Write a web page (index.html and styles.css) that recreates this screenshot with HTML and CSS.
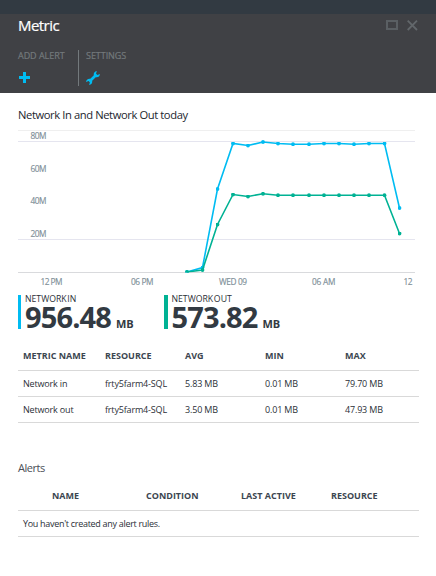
FILE: index.html
```html
<!DOCTYPE html>
<html lang="en">
<head>
<meta charset="utf-8">
<title>Metric</title>
<link rel="stylesheet" href="styles.css">
</head>
<body>
<div class="topbar"></div>
<header class="blade-header">
  <div class="title-row">
    <h1>Metric</h1>
    <div class="window-actions">
      <svg width="12" height="10" viewBox="0 0 12 10"><path d="M1 1H11V9H1Z" fill="none" stroke="#5a5f63" stroke-width="2"/></svg>
      <svg width="11" height="11" viewBox="0 0 11 11"><path d="M.7.7L10 10M10 .7L.7 10" fill="none" stroke="#62676b" stroke-width="1.8"/></svg>
    </div>
  </div>
  <nav class="commands">
    <div class="command add"><span>ADD ALERT</span>
      <svg width="14" height="14" viewBox="0 0 14 14"><path d="M5 1H8V5H12V8H8V12H5V8H1V5H5Z" fill="#00bcf2"/></svg>
    </div>
    <div class="command settings"><span>SETTINGS</span>
      <svg width="14" height="14" viewBox="0 0 14 14"><path d="M10.9 0L10 2.6L11.3 4L14 3C13.8 5.3 12.1 6.7 9.7 6.2L6.2 9.7C6.6 12 5.3 13.8 3 14L3.9 11.5L2.6 10.1L0 11C.2 8.7 1.9 7.4 4.3 7.8L7.8 4.3C7.3 2 8.6.3 10.9 0Z" fill="#00bcf2"/></svg>
    </div>
  </nav>
</header>
<main>
  <h2 class="chart-title">Network In and Network Out today</h2>
  <svg class="chart" width="397" height="162" viewBox="18 130 397 162">
    <path d="M18 130.5H415" stroke="#efefef"/>
    <path d="M18 141.5H415M18 239.5H415" stroke="#e5e5ef"/>
    <path d="M18 272.5H415" stroke="#d9dadd"/>
    <g class="axis">
      <text x="30.5" y="139" textLength="16">80M</text>
      <text x="30.5" y="172" textLength="16">60M</text>
      <text x="30.5" y="204" textLength="16">40M</text>
      <text x="30.5" y="237" textLength="16">20M</text>
      <text x="40.5" y="285" textLength="22">12 PM</text>
      <text x="131" y="285" textLength="22.5">06 PM</text>
      <text x="219" y="285" textLength="28">WED 09</text>
      <text x="312" y="285" textLength="23.5">06 AM</text>
      <text x="403.5" y="285" textLength="9">12</text>
    </g>
    <clipPath id="plot"><path d="M18 130H415V272.5H18Z"/></clipPath>
    <g clip-path="url(#plot)">
      <polyline class="line in" points="187,272 202.5,267.5 217.5,189 233,143.5 248,145.5 263,142 278,143.5 293,144.2 309,144.2 324,143.5 339,143.5 354,144.2 369,143.5 384.5,143.5 399.5,208"/>
      <polyline class="line out" points="187,272 202.5,270 217.5,224.5 233,194.5 248,196.5 263,193.8 278,195.2 293,195.2 309,195.2 324,195.2 339,195.2 354,195.2 369,195.2 384.5,195.2 399.5,233.5"/>
    </g>
  </svg>
  <svg class="markers" width="0" height="0">
    <defs>
      <marker id="dot-in" markerUnits="userSpaceOnUse" markerWidth="4" markerHeight="4" refX="2" refY="2"><circle cx="2" cy="2" r="1.9" fill="#00bcf2"/></marker>
      <marker id="dot-out" markerUnits="userSpaceOnUse" markerWidth="4" markerHeight="4" refX="2" refY="2"><circle cx="2" cy="2" r="1.9" fill="#00b294"/></marker>
    </defs>
  </svg>
  <section class="totals">
    <div class="total in"><span class="label">NETWORK IN</span><div class="figure"><strong>956.48</strong><b>MB</b></div></div>
    <div class="total out"><span class="label">NETWORK OUT</span><div class="figure"><strong>573.82</strong><b>MB</b></div></div>
  </section>
  <table class="metrics">
    <thead><tr><th>METRIC NAME</th><th>RESOURCE</th><th>AVG</th><th>MIN</th><th>MAX</th></tr></thead>
    <tbody>
      <tr><td>Network in</td><td>frty5farm4-SQL</td><td>5.83 MB</td><td>0.01 MB</td><td>79.70 MB</td></tr>
      <tr><td>Network out</td><td>frty5farm4-SQL</td><td>3.50 MB</td><td>0.01 MB</td><td>47.93 MB</td></tr>
    </tbody>
  </table>
  <h2 class="alerts-title">Alerts</h2>
  <table class="alerts">
    <thead><tr><th>NAME</th><th>CONDITION</th><th>LAST ACTIVE</th><th>RESOURCE</th></tr></thead>
    <tbody><tr><td colspan="4">You haven't created any alert rules.</td></tr></tbody>
  </table>
</main>
</body>
</html>
```
FILE: styles.css
```css
* { box-sizing: border-box; }
body { margin: 0; background: #fff; color: #2b2f37; font: 9px/12px "Open Sans", "Noto Sans", sans-serif; height: 576px; overflow: hidden; }
h1, h2 { margin: 0; font-weight: 400; }
svg { display: block; }
.topbar { height: 14px; background: #323a42; }
.blade-header { height: 79px; padding: 0 18px; background: #404145; }
.title-row { display: flex; justify-content: space-between; height: 36px; }
h1 { color: #fff; font-size: 15px; line-height: 20px; font-weight: 500; letter-spacing: -.55px; padding-top: 1px; -webkit-text-stroke: .2px #fff; }
.window-actions { display: flex; gap: 9px; padding-top: 6px; }
.commands { display: flex; color: #73797c; font-size: 9px; }
.commands span { letter-spacing: -.05px; -webkit-text-stroke: .2px #73797c; }
.command { height: 36px; }
.command svg { margin-top: 9px; }
.add { width: 61px; border-right: 1px solid #73797c; }
.settings { padding-left: 7px; }
main { padding: 14px 18px 0; }
.chart-title { font-size: 11.2px; line-height: 15px; height: 23px; letter-spacing: -.4px; white-space: nowrap; color: #22262e; }
.axis { fill: #7f9099; font-size: 8.3px; stroke: #7f9099; stroke-width: .15px; }
.line { fill: none; stroke-width: 1.6; }
.line.in { stroke: #00bcf2; marker: url(#dot-in); }
.line.out { stroke: #00b294; marker: url(#dot-out); }
.markers { position: absolute; }
.totals { display: flex; padding-top: 3px; height: 51px; }
.total { width: 146px; height: 34px; padding-left: 4px; border-left: 3px solid #00bcf2; white-space: nowrap; }
.total.out { border-left-color: #00b294; border-left-width: 4px; padding-left: 3.5px; }
.label { display: block; font-size: 8.7px; line-height: 8px; word-spacing: -1.5px; }
.figure { display: flex; align-items: baseline; gap: 5px; color: #323a42; line-height: 28px; }
.figure strong { font-size: 29px; font-weight: 700; letter-spacing: -.85px; }
.figure b { font-size: 11px; letter-spacing: -.1px; }
table { width: 401px; border-collapse: separate; border-spacing: 0; table-layout: fixed; }
th, td { height: 26px; padding: 0; border-bottom: 1px solid #d9d9d9; text-align: left; font-size: 9px; line-height: 12px; white-space: nowrap; }
th { color: #3c4650; }
td { letter-spacing: -.17px; }
.metrics th, .metrics td, .alerts td { padding-left: 5px; }
.metrics th:first-child { width: 82px; }
.metrics th:nth-child(2), .metrics th:nth-child(3), .metrics th:nth-child(4) { width: 80px; }
.metrics th { height: 28px; padding-bottom: 2px; }
.metrics td { padding-top: 1px; }
.alerts-title { margin-top: 37px; font-size: 11px; line-height: 16px; color: #4b4f57; letter-spacing: -.45px; }
.alerts { margin-top: 7px; }
.alerts th { height: 28px; padding-left: 34px; padding-bottom: 1px; }
.alerts td { padding-top: 1px; letter-spacing: -.3px; }
.alerts th:nth-child(1) { width: 94px; }
.alerts th:nth-child(2) { width: 95px; }
.alerts th:nth-child(3) { width: 90px; }
```
